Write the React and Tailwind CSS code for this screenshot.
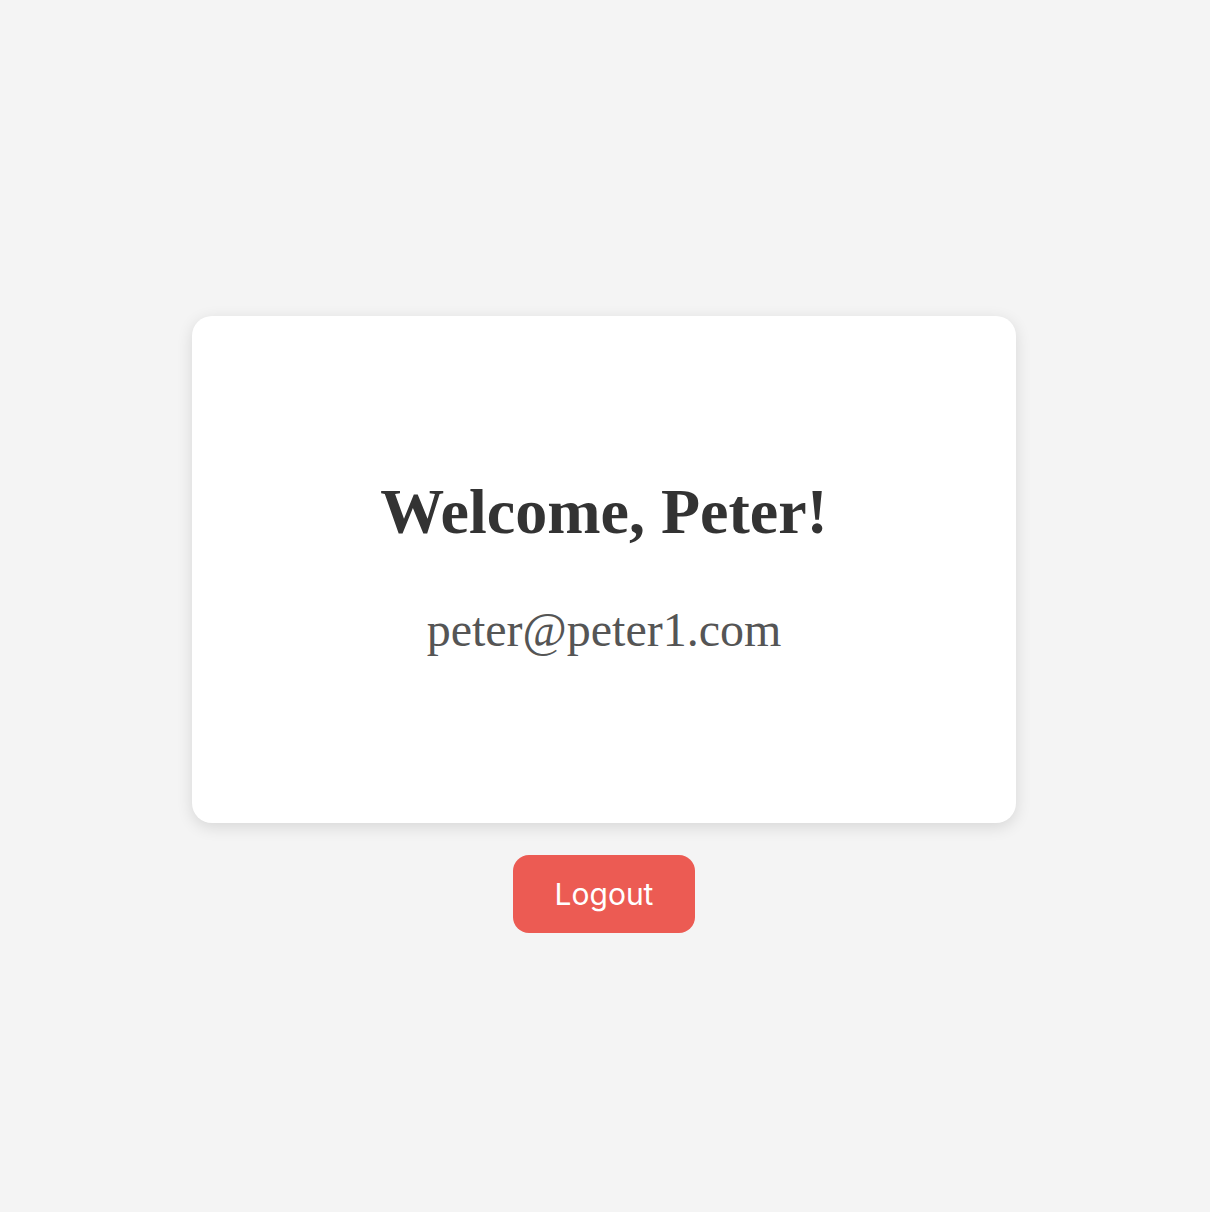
export default function App() {
  return (
    <div className="min-h-screen bg-[#f4f4f4] flex flex-col items-center justify-center pt-[37px] pr-[2px]">
      <div className="w-[824px] h-[507px] bg-white rounded-[20px] shadow-[0_4px_16px_rgba(0,0,0,0.12)] flex flex-col items-center justify-center pb-[5px] text-center" style={{ fontFamily: '"Liberation Serif", serif' }}>
        <h1 className="text-[64px] leading-none font-bold text-[#333]">Welcome, Peter!</h1>
        <p className="mt-[62px] text-[48px] leading-none text-[#555]">peter@peter1.com</p>
      </div>
      <button className="mt-8 w-[182px] h-[78px] rounded-[16px] bg-[#ec5b53] text-white text-[30px] font-['Inter',sans-serif]">
        Logout
      </button>
    </div>
  );
}
